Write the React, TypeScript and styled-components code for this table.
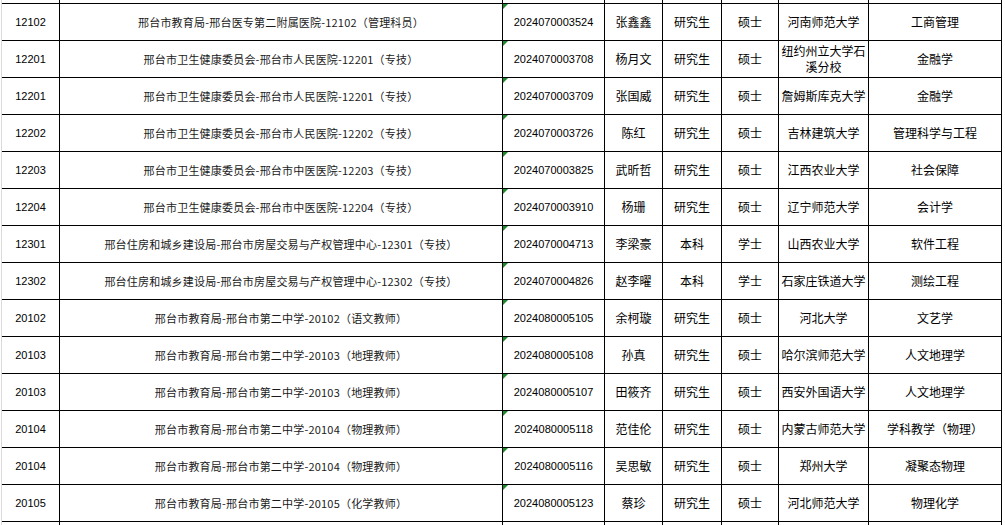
import React from 'react';
import styled, {createGlobalStyle, css} from 'styled-components';

const GlobalStyle = createGlobalStyle`
  html, body {
    margin: 0;
    padding: 0;
    background: #ffffff;
  }

  body {
    font-family: "Noto Sans CJK SC", "Liberation Sans", sans-serif;
    color: #000;
  }
`

type Row = {
    code: string
    post: string
    ticket: string
    name: string
    edu: string
    degree: string
    school: string
    major: string
}

const rows: Row[] = [
    {code: '12102', post: '邢台市教育局-邢台医专第二附属医院-12102（管理科员）', ticket: '2024070003524', name: '张鑫鑫', edu: '研究生', degree: '硕士', school: '河南师范大学', major: '工商管理'},
    {code: '12201', post: '邢台市卫生健康委员会-邢台市人民医院-12201（专技）', ticket: '2024070003708', name: '杨月文', edu: '研究生', degree: '硕士', school: '纽约州立大学石溪分校', major: '金融学'},
    {code: '12201', post: '邢台市卫生健康委员会-邢台市人民医院-12201（专技）', ticket: '2024070003709', name: '张国威', edu: '研究生', degree: '硕士', school: '詹姆斯库克大学', major: '金融学'},
    {code: '12202', post: '邢台市卫生健康委员会-邢台市人民医院-12202（专技）', ticket: '2024070003726', name: '陈红', edu: '研究生', degree: '硕士', school: '吉林建筑大学', major: '管理科学与工程'},
    {code: '12203', post: '邢台市卫生健康委员会-邢台市中医医院-12203（专技）', ticket: '2024070003825', name: '武昕哲', edu: '研究生', degree: '硕士', school: '江西农业大学', major: '社会保障'},
    {code: '12204', post: '邢台市卫生健康委员会-邢台市中医医院-12204（专技）', ticket: '2024070003910', name: '杨珊', edu: '研究生', degree: '硕士', school: '辽宁师范大学', major: '会计学'},
    {code: '12301', post: '邢台住房和城乡建设局-邢台市房屋交易与产权管理中心-12301（专技）', ticket: '2024070004713', name: '李梁豪', edu: '本科', degree: '学士', school: '山西农业大学', major: '软件工程'},
    {code: '12302', post: '邢台住房和城乡建设局-邢台市房屋交易与产权管理中心-12302（专技）', ticket: '2024070004826', name: '赵李曜', edu: '本科', degree: '学士', school: '石家庄铁道大学', major: '测绘工程'},
    {code: '20102', post: '邢台市教育局-邢台市第二中学-20102（语文教师）', ticket: '2024080005105', name: '余柯璇', edu: '研究生', degree: '硕士', school: '河北大学', major: '文艺学'},
    {code: '20103', post: '邢台市教育局-邢台市第二中学-20103（地理教师）', ticket: '2024080005108', name: '孙真', edu: '研究生', degree: '硕士', school: '哈尔滨师范大学', major: '人文地理学'},
    {code: '20103', post: '邢台市教育局-邢台市第二中学-20103（地理教师）', ticket: '2024080005107', name: '田筱齐', edu: '研究生', degree: '硕士', school: '西安外国语大学', major: '人文地理学'},
    {code: '20104', post: '邢台市教育局-邢台市第二中学-20104（物理教师）', ticket: '2024080005118', name: '范佳伦', edu: '研究生', degree: '硕士', school: '内蒙古师范大学', major: '学科教学（物理）'},
    {code: '20104', post: '邢台市教育局-邢台市第二中学-20104（物理教师）', ticket: '2024080005116', name: '吴思敏', edu: '研究生', degree: '硕士', school: '郑州大学', major: '凝聚态物理'},
    {code: '20105', post: '邢台市教育局-邢台市第二中学-20105（化学教师）', ticket: '2024080005123', name: '蔡珍', edu: '研究生', degree: '硕士', school: '河北师范大学', major: '物理化学'},
]

const COLUMNS = '58px 443px 102px 58px 59px 57px 90px 133px'

function App() {
    return (
        <>
            <GlobalStyle/>
            <Sheet>
                <Grid $rows={rows.length}>
                    {Array.from({length: 8}).map((_, i) => <Cell key={'top' + i}/>)}
                    {rows.map((r, i) => (
                        <React.Fragment key={i}>
                            <Cell $kind="code">{r.code}</Cell>
                            <Cell $kind="post">{r.post}</Cell>
                            <Cell $kind="ticket" $flag>{r.ticket}</Cell>
                            <Cell>{r.name}</Cell>
                            <Cell>{r.edu}</Cell>
                            <Cell>{r.degree}</Cell>
                            <Cell>{r.school}</Cell>
                            <Cell>{r.major}</Cell>
                        </React.Fragment>
                    ))}
                    {Array.from({length: 8}).map((_, i) => <Cell key={'bottom' + i} $open/>)}
                </Grid>
            </Sheet>
        </>
    );
}

export default App;

const Sheet = styled.div`
  margin-left: 1px;
  border-left: 1px solid #dadada;
  height: 525px;
  overflow: hidden;
  width: 1004px;
`

const Grid = styled.div<{ $rows: number }>`
  display: grid;
  grid-template-columns: ${COLUMNS};
  grid-template-rows: 4px repeat(${p => p.$rows}, 37px) 8px;
`

const Cell = styled.div<{ $kind?: 'code' | 'post' | 'ticket', $flag?: boolean, $open?: boolean }>`
  position: relative;
  box-sizing: border-box;
  border-right: 1px solid #000;
  border-bottom: 1px solid #000;
  display: flex;
  align-items: center;
  justify-content: center;
  text-align: center;
  padding: 0 1px;
  font-size: 12px;
  line-height: 16px;
  color: #000;
  overflow: hidden;

  ${p => p.$open && css`
    border-bottom: none;
  `}

  ${p => (p.$kind === 'code' || p.$kind === 'ticket') && css`
    font-family: "Liberation Sans", "Noto Sans CJK SC", sans-serif;
    font-size: 11px;
  `}

  ${p => p.$kind === 'post' && css`
    font-size: 11px;
    color: #1a1a1a;
    letter-spacing: 0.2px;
  `}

  ${p => p.$flag && css`
    &::before {
      content: '';
      position: absolute;
      top: 0;
      left: 0;
      border-top: 5px solid #1d8a2a;
      border-right: 5px solid transparent;
    }
  `}
`
